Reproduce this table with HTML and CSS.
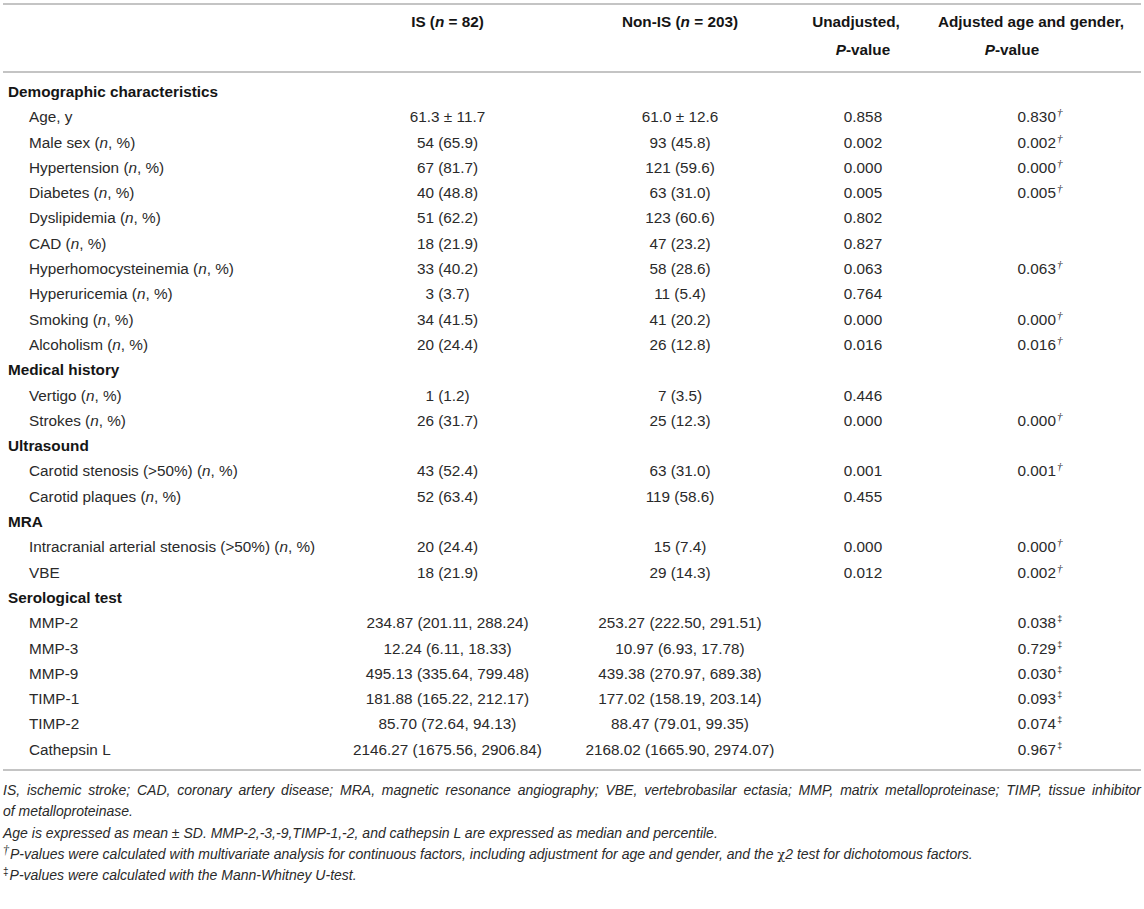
FILE: index.html
```html
<!DOCTYPE html>
<html>
<head>
<meta charset="utf-8">
<link rel="stylesheet" href="styles.css">
</head>
<body>
<div class="page">
<table class="tbl">
  <colgroup>
    <col class="c-label"><col class="c-is"><col class="c-non"><col class="c-un"><col class="c-adj">
  </colgroup>
  <thead>
    <tr>
      <th></th>
      <th class="h-is">IS (<i>n</i> = 82)</th>
      <th class="h-non">Non-IS (<i>n</i> = 203)</th>
      <th class="h-un"><span class="un1">Unadjusted,</span><br><i>P</i>-value</th>
      <th class="h-adj">Adjusted age and gender,<br><span class="adj2"><i>P</i>-value</span></th>
    </tr>
  </thead>
  <tbody>
    <tr class="sec first"><td colspan="5">Demographic characteristics</td></tr>
    <tr><td class="lab">Age, y</td><td class="v-is">61.3 ± 11.7</td><td class="v-non">61.0 ± 12.6</td><td class="v-un">0.858</td><td class="v-adj">0.830<sup class="dg">†</sup></td></tr>
    <tr><td class="lab">Male sex (<i>n</i>, %)</td><td class="v-is">54 (65.9)</td><td class="v-non">93 (45.8)</td><td class="v-un">0.002</td><td class="v-adj">0.002<sup class="dg">†</sup></td></tr>
    <tr><td class="lab">Hypertension (<i>n</i>, %)</td><td class="v-is">67 (81.7)</td><td class="v-non">121 (59.6)</td><td class="v-un">0.000</td><td class="v-adj">0.000<sup class="dg">†</sup></td></tr>
    <tr><td class="lab">Diabetes (<i>n</i>, %)</td><td class="v-is">40 (48.8)</td><td class="v-non">63 (31.0)</td><td class="v-un">0.005</td><td class="v-adj">0.005<sup class="dg">†</sup></td></tr>
    <tr><td class="lab">Dyslipidemia (<i>n</i>, %)</td><td class="v-is">51 (62.2)</td><td class="v-non">123 (60.6)</td><td class="v-un">0.802</td><td class="v-adj"></td></tr>
    <tr><td class="lab">CAD (<i>n</i>, %)</td><td class="v-is">18 (21.9)</td><td class="v-non">47 (23.2)</td><td class="v-un">0.827</td><td class="v-adj"></td></tr>
    <tr><td class="lab">Hyperhomocysteinemia (<i>n</i>, %)</td><td class="v-is">33 (40.2)</td><td class="v-non">58 (28.6)</td><td class="v-un">0.063</td><td class="v-adj">0.063<sup class="dg">†</sup></td></tr>
    <tr><td class="lab">Hyperuricemia (<i>n</i>, %)</td><td class="v-is">3 (3.7)</td><td class="v-non">11 (5.4)</td><td class="v-un">0.764</td><td class="v-adj"></td></tr>
    <tr><td class="lab">Smoking (<i>n</i>, %)</td><td class="v-is">34 (41.5)</td><td class="v-non">41 (20.2)</td><td class="v-un">0.000</td><td class="v-adj">0.000<sup class="dg">†</sup></td></tr>
    <tr><td class="lab">Alcoholism (<i>n</i>, %)</td><td class="v-is">20 (24.4)</td><td class="v-non">26 (12.8)</td><td class="v-un">0.016</td><td class="v-adj">0.016<sup class="dg">†</sup></td></tr>
    <tr class="sec"><td colspan="5">Medical history</td></tr>
    <tr><td class="lab">Vertigo (<i>n</i>, %)</td><td class="v-is">1 (1.2)</td><td class="v-non">7 (3.5)</td><td class="v-un">0.446</td><td class="v-adj"></td></tr>
    <tr><td class="lab">Strokes (<i>n</i>, %)</td><td class="v-is">26 (31.7)</td><td class="v-non">25 (12.3)</td><td class="v-un">0.000</td><td class="v-adj">0.000<sup class="dg">†</sup></td></tr>
    <tr class="sec"><td colspan="5">Ultrasound</td></tr>
    <tr><td class="lab">Carotid stenosis (&gt;50%) (<i>n</i>, %)</td><td class="v-is">43 (52.4)</td><td class="v-non">63 (31.0)</td><td class="v-un">0.001</td><td class="v-adj">0.001<sup class="dg">†</sup></td></tr>
    <tr><td class="lab">Carotid plaques (<i>n</i>, %)</td><td class="v-is">52 (63.4)</td><td class="v-non">119 (58.6)</td><td class="v-un">0.455</td><td class="v-adj"></td></tr>
    <tr class="sec"><td colspan="5">MRA</td></tr>
    <tr><td class="lab">Intracranial arterial stenosis (&gt;50%) (<i>n</i>, %)</td><td class="v-is">20 (24.4)</td><td class="v-non">15 (7.4)</td><td class="v-un">0.000</td><td class="v-adj">0.000<sup class="dg">†</sup></td></tr>
    <tr><td class="lab">VBE</td><td class="v-is">18 (21.9)</td><td class="v-non">29 (14.3)</td><td class="v-un">0.012</td><td class="v-adj">0.002<sup class="dg">†</sup></td></tr>
    <tr class="sec"><td colspan="5">Serological test</td></tr>
    <tr><td class="lab">MMP-2</td><td class="v-is">234.87 (201.11, 288.24)</td><td class="v-non">253.27 (222.50, 291.51)</td><td class="v-un"></td><td class="v-adj">0.038<sup class="ddg">‡</sup></td></tr>
    <tr><td class="lab">MMP-3</td><td class="v-is">12.24 (6.11, 18.33)</td><td class="v-non">10.97 (6.93, 17.78)</td><td class="v-un"></td><td class="v-adj">0.729<sup class="ddg">‡</sup></td></tr>
    <tr><td class="lab">MMP-9</td><td class="v-is">495.13 (335.64, 799.48)</td><td class="v-non">439.38 (270.97, 689.38)</td><td class="v-un"></td><td class="v-adj">0.030<sup class="ddg">‡</sup></td></tr>
    <tr><td class="lab">TIMP-1</td><td class="v-is">181.88 (165.22, 212.17)</td><td class="v-non">177.02 (158.19, 203.14)</td><td class="v-un"></td><td class="v-adj">0.093<sup class="ddg">‡</sup></td></tr>
    <tr><td class="lab">TIMP-2</td><td class="v-is">85.70 (72.64, 94.13)</td><td class="v-non">88.47 (79.01, 99.35)</td><td class="v-un"></td><td class="v-adj">0.074<sup class="ddg">‡</sup></td></tr>
    <tr class="last"><td class="lab">Cathepsin L</td><td class="v-is">2146.27 (1675.56, 2906.84)</td><td class="v-non">2168.02 (1665.90, 2974.07)</td><td class="v-un"></td><td class="v-adj">0.967<sup class="ddg">‡</sup></td></tr>
  </tbody>
</table>
<div class="notes">
  <p class="note"><span class="jline">IS, ischemic stroke; CAD, coronary artery disease; MRA, magnetic resonance angiography; VBE, vertebrobasilar ectasia; MMP, matrix metalloproteinase; TIMP, tissue inhibitor</span> of metalloproteinase.</p>
  <p class="note">Age is expressed as mean ± SD. MMP-2,-3,-9,TIMP-1,-2, and cathepsin L are expressed as median and percentile.</p>
  <p class="note"><sup class="fdg">†</sup>P-values were calculated with multivariate analysis for continuous factors, including adjustment for age and gender, and the <span class="chi">χ</span>2 test for dichotomous factors.</p>
  <p class="note"><sup class="fddg">‡</sup>P-values were calculated with the Mann-Whitney U-test.</p>
</div>
</div>
</body>
</html>
```
FILE: styles.css
```css
html, body {
  margin: 0;
  padding: 0;
  background: #ffffff;
}
body {
  font-family: "Liberation Sans", Arial, Helvetica, sans-serif;
  font-size: 15.3px;
  color: #2a2a2a;
}
.page {
  padding: 3px 3px 0 3px;
}
.tbl {
  width: 1138px;
  border-collapse: collapse;
  table-layout: fixed;
}
.c-label { width: 337px; }
.c-is { width: 215px; }
.c-non { width: 250px; }
.c-un { width: 116px; }
.c-adj { width: 220px; }

.tbl thead th {
  border-top: 2px solid #c4c4c4;
  border-bottom: 2px solid #c4c4c4;
  font-weight: bold;
  color: #151515;
  text-align: center;
  vertical-align: top;
  line-height: 28px;
  padding: 3px 0 7px 0;
  white-space: nowrap;
}
.h-un .un1 {
  display: inline-block;
  padding-right: 14px;
}
.h-adj .adj2 {
  display: inline-block;
  margin-right: 38px;
}
.tbl td {
  padding: 0;
  line-height: 25.3px;
  white-space: nowrap;
}
.tbl tr.first td { padding-top: 6px; }
.tbl tr.last td { padding-bottom: 7px; border-bottom: 2px solid #c4c4c4; }
.sec td {
  font-weight: bold;
  color: #151515;
  padding-left: 5px;
}
.tbl td.lab { padding-left: 26px; }
.v-is, .v-non, .v-un, .v-adj { text-align: center; }
.tbl td.v-adj { padding-left: 18px; }
sup {
  font-size: 9px;
  line-height: 0;
  vertical-align: 6px;
  margin-left: 1px;
}
.dg { font-style: italic; font-family: "Liberation Serif", serif; font-size: 11px; }
.ddg { font-size: 9px; }

.notes {
  margin-top: 9px;
}
.note {
  margin: 0;
  font-style: italic;
  font-size: 14px;
  line-height: 21.3px;
  text-align: justify;
  color: #2a2a2a;
}
.jline {
  display: block;
  text-align: justify;
  text-align-last: justify;
}
.fdg { font-family: "Liberation Serif", serif; font-size: 12px; vertical-align: 5px; margin-left: 0; margin-right: 1px; }
.fddg { font-style: normal; font-size: 10px; vertical-align: 5px; margin-left: 0; margin-right: 1px; }
.chi { font-style: normal; font-family: "DejaVu Serif", serif; font-size: 13px; }
```
